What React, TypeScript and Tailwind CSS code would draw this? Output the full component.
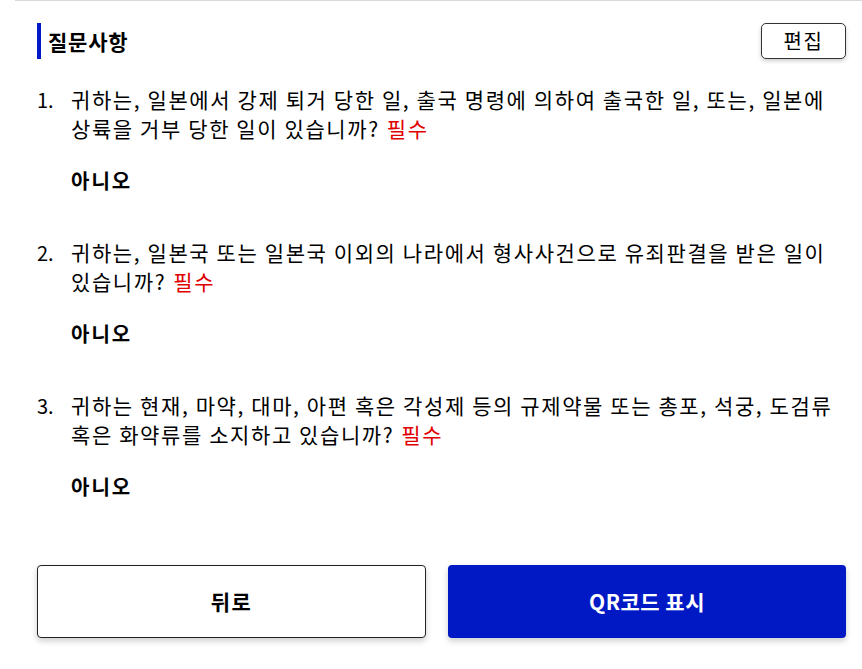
import React from "react";

const items = [
  {
    q: "귀하는, 일본에서 강제 퇴거 당한 일, 출국 명령에 의하여 출국한 일, 또는, 일본에 상륙을 거부 당한 일이 있습니까?",
    a: "아니오",
  },
  {
    q: "귀하는, 일본국 또는 일본국 이외의 나라에서 형사사건으로 유죄판결을 받은 일이 있습니까?",
    a: "아니오",
  },
  {
    q: "귀하는 현재, 마약, 대마, 아편 혹은 각성제 등의 규제약물 또는 총포, 석궁, 도검류 혹은 화약류를 소지하고 있습니까?",
    a: "아니오",
  },
];

export default function App() {
  return (
    <div
      className="w-[862px] h-[669px] bg-white text-black overflow-hidden"
      style={{ fontFamily: '"Noto Sans CJK KR", "Noto Sans", sans-serif' }}
    >
      <div className="ml-[15px] h-px bg-[#d9d9d9]" />
      <div className="pl-[37px] pr-[16px]">
        <div className="mt-[22px] flex items-center justify-between h-[36px]">
          <div className="flex items-center h-[36px]">
            <div className="w-[4px] h-[36px] bg-[#0019c4]" />
            <div className="ml-[7px] text-[21px] font-bold leading-none tracking-[0.8px]">질문사항</div>
          </div>
          <button className="w-[85px] h-[36px] border border-[#333] rounded-[5px] bg-white text-[20px] leading-none tracking-[1.5px] shadow-[0_2px_4px_rgba(0,0,0,0.2)]">
            편집
          </button>
        </div>
        <ol className="mt-[26px] flex flex-col gap-[43px]">
          {items.map((it, i) => (
            <li key={i} className="flex">
              <div className="w-[34px] text-[20px] leading-[29px]">{i + 1}.</div>
              <div className="flex-1">
                <p className="text-[21px] leading-[29px] tracking-[1.6px]">
                  {it.q}
                  <span className="ml-[7px] text-[#e00000]">필수</span>
                </p>
                <p className="mt-[23px] text-[20px] leading-[29px] font-bold tracking-[2px]">{it.a}</p>
              </div>
            </li>
          ))}
        </ol>
        <div className="mt-[64px] flex gap-[22px]">
          <button className="w-[389px] h-[73px] border border-[#222] rounded-[4px] bg-white text-[21px] font-bold tracking-[1.5px] shadow-[0_3px_6px_rgba(0,0,0,0.2)]">
            뒤로
          </button>
          <button className="flex-1 h-[73px] rounded-[4px] bg-[#0019c4] text-white text-[21px] font-bold tracking-[0.5px] shadow-[0_3px_6px_rgba(0,0,0,0.2)]">
            QR코드 표시
          </button>
        </div>
      </div>
    </div>
  );
}
